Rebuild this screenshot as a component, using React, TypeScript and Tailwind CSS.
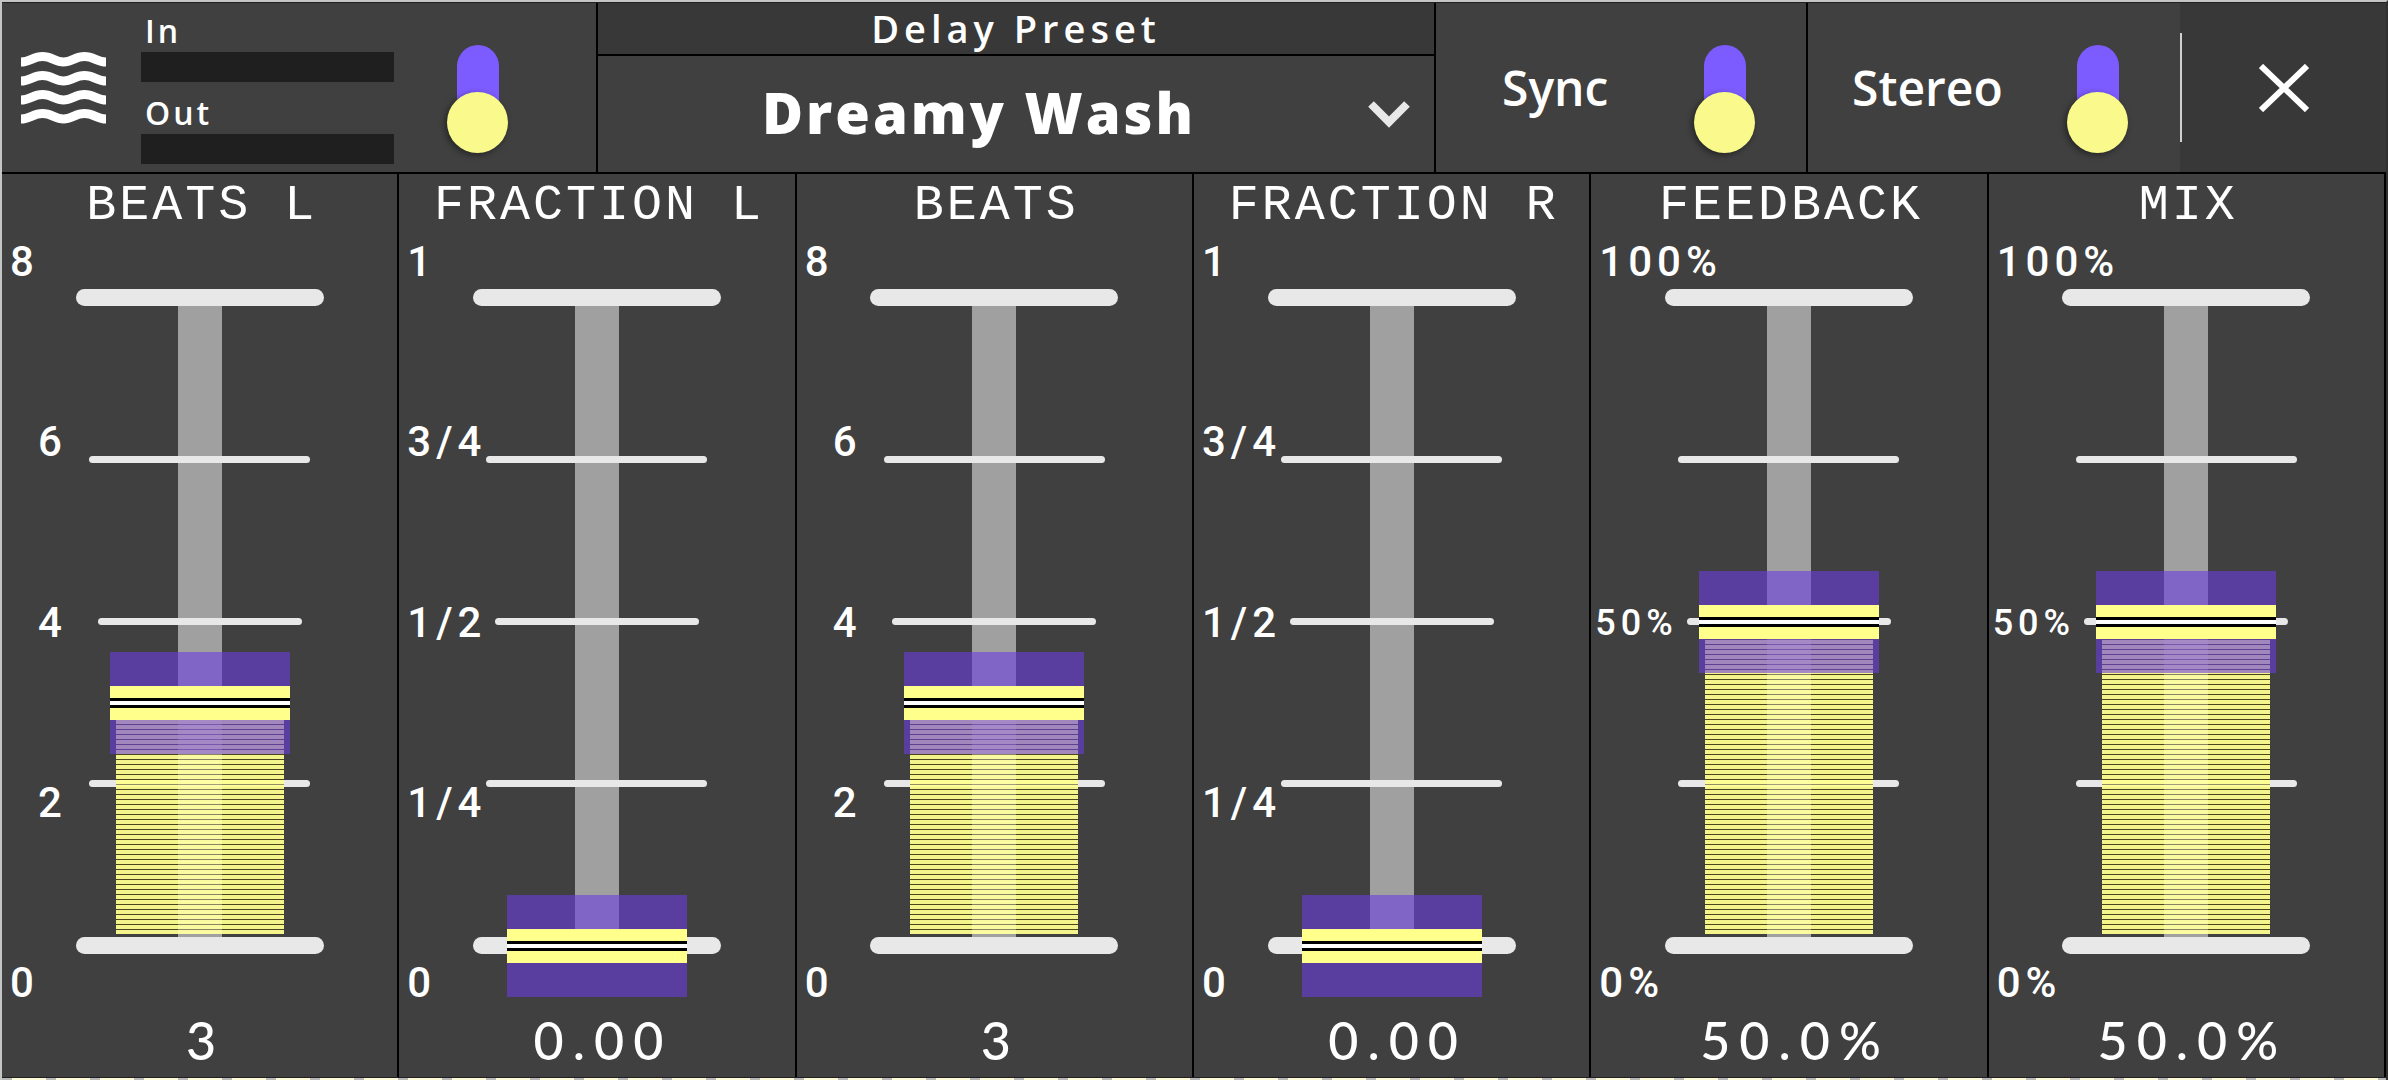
import { useState } from "react";

type Scale = { text: string; className: string };

type Channel = {
  name: string;
  max: number;
  step: number;
  initial: number;
  scale: Scale[];
  format: (v: number) => string;
};

const EDGE = "pl-2 text-[42px]";
const INDENT = "pl-9 text-[42px]";
const SMALL = "pl-1 text-[36px]";

const BEATS: Scale[] = [
  { text: "8", className: EDGE },
  { text: "6", className: INDENT },
  { text: "4", className: INDENT },
  { text: "2", className: INDENT },
  { text: "0", className: EDGE },
];

const FRACTIONS: Scale[] = [
  { text: "1", className: EDGE },
  { text: "3/4", className: EDGE },
  { text: "1/2", className: EDGE },
  { text: "1/4", className: EDGE },
  { text: "0", className: EDGE },
];

const PERCENT: Scale[] = [
  { text: "100%", className: EDGE },
  { text: "", className: SMALL },
  { text: "50%", className: SMALL },
  { text: "", className: SMALL },
  { text: "0%", className: EDGE },
];

const whole = (v: number) => v.toFixed(0);
const decimal = (v: number) => v.toFixed(2);
const percent = (v: number) => `${v.toFixed(1)}%`;

const CHANNELS: Channel[] = [
  { name: "BEATS L", max: 8, step: 1, initial: 3, scale: BEATS, format: whole },
  { name: "FRACTION L", max: 1, step: 0.01, initial: 0, scale: FRACTIONS, format: decimal },
  { name: "BEATS", max: 8, step: 1, initial: 3, scale: BEATS, format: whole },
  { name: "FRACTION R", max: 1, step: 0.01, initial: 0, scale: FRACTIONS, format: decimal },
  { name: "FEEDBACK", max: 100, step: 0.5, initial: 50, scale: PERCENT, format: percent },
  { name: "MIX", max: 100, step: 0.5, initial: 50, scale: PERCENT, format: percent },
];

const TICKS = [
  "h-[17px] w-[248px]",
  "h-[7px] w-[221px]",
  "h-[7px] w-[204px]",
  "h-[7px] w-[221px]",
  "h-[17px] w-[248px]",
];

function Fader({ channel }: { channel: Channel }) {
  const [value, setValue] = useState(channel.initial);
  const level = `${(value / channel.max) * 100}%`;
  return (
    <section className="flex flex-col border-r-2 border-black bg-[#404040]">
      <h2 className="h-[66px] pl-1 text-center font-['Liberation_Mono',monospace] text-[50px] leading-[64px] tracking-[3px] whitespace-nowrap">
        {channel.name}
      </h2>
      <div className="grid min-h-[600px] flex-1">
        <ul className="col-start-1 row-start-1 flex flex-col justify-between font-['Roboto',sans-serif] font-medium tracking-[5px]">
          {channel.scale.map((mark, i) => (
            <li key={i} className={`h-11 leading-[44px] ${mark.className}`}>
              {mark.text}
            </li>
          ))}
        </ul>
        <div className="relative col-start-1 row-start-1 mx-auto mt-[49px] mb-[51px] w-[248px]">
          <div className="absolute inset-x-[102px] inset-y-2 bg-[#a0a0a0]" />
          <div className="absolute inset-0 flex flex-col items-center justify-between">
            {TICKS.map((tick, i) => (
              <div key={i} className="flex h-[17px] items-center">
                <div className={`rounded-full bg-[#e8e8e8] ${tick}`} />
              </div>
            ))}
          </div>
          <div className="absolute inset-x-0 inset-y-2">
            <div
              className="absolute inset-x-[40px] bottom-0 overflow-hidden"
              style={{ height: level }}
            >
              <div className="absolute inset-x-0 top-0 bottom-3 bg-[repeating-linear-gradient(to_top,#ffff90f0_0px,#ffff90f0_4px,#50480090_4px,#50480090_5px)]" />
              <div className="absolute inset-x-[62px] top-0 bottom-3 bg-white/15" />
            </div>
            <div
              className="absolute inset-x-[34px] flex h-[102px] translate-y-1/2 flex-col"
              style={{ bottom: level }}
            >
              <div className="flex-1 bg-[#6b3ee0]/60" />
              <div className="h-3 bg-[#ffff8c]" />
              <div className="h-[3px] bg-black" />
              <div className="h-1 bg-white" />
              <div className="h-[3px] bg-black" />
              <div className="h-3 bg-[#ffff8c]" />
              <div className="flex-1 bg-[#6b3ee0]/60" />
            </div>
          </div>
          <input
            type="range"
            aria-label={channel.name}
            min={0}
            max={channel.max}
            step={channel.step}
            value={value}
            onChange={(e) => setValue(Number(e.target.value))}
            className="absolute inset-0 h-full w-full cursor-pointer opacity-0 [direction:rtl] [writing-mode:vertical-lr]"
          />
        </div>
      </div>
      <output className="h-[72px] pl-3 text-center font-['Lato',sans-serif] text-[52px] leading-[70px] font-medium tracking-[9px]">
        {channel.format(value)}
      </output>
    </section>
  );
}

function Toggle({ label }: { label: string }) {
  const [on, setOn] = useState(false);
  return (
    <label className="relative flex h-[108px] w-[61px] cursor-pointer justify-center">
      <input
        type="checkbox"
        role="switch"
        aria-label={label}
        checked={on}
        onChange={() => setOn(!on)}
        className="peer absolute inset-0 h-full w-full cursor-pointer opacity-0"
      />
      <span className="h-24 w-[42px] rounded-full bg-[#7c5cff]" />
      <span className="absolute bottom-0 size-[61px] rounded-full bg-[#fafa8c] shadow-[-2px_2px_6px_rgba(0,0,0,0.45)] peer-checked:bottom-12" />
    </label>
  );
}

function Waves() {
  return (
    <svg className="h-[72px] w-[85px]" viewBox="0 0 85 72" fill="none" stroke="#fff" strokeWidth="9" aria-hidden="true">
      {[10, 29, 48, 67].map((y) => (
        <path
          key={y}
          d={`M0 ${y}C9 ${y} 12 ${y - 5.5} 21.5 ${y - 5.5}S34 ${y} 42.5 ${y}S54 ${y - 5.5} 63.5 ${y - 5.5}S76 ${y} 85 ${y}`}
        />
      ))}
    </svg>
  );
}

function Meter({ label }: { label: string }) {
  return (
    <div>
      <div className="h-[42px] pl-1 text-[32px] leading-[42px] font-semibold tracking-[3px]">{label}</div>
      <div role="meter" aria-label={label} aria-valuenow={0} className="h-[30px] bg-[#1f1f1f]" />
    </div>
  );
}

export default function App() {
  return (
    <div className="flex min-h-screen flex-col border-t-2 border-r-2 border-l-2 border-[#c4c6c6] border-r-[#303030] bg-[#404040] font-['Open_Sans',sans-serif] text-white">
      <header className="flex h-[172px] border-t border-b-2 border-t-[#202020] border-b-black">
        <div className="flex w-1/4 items-center border-r-2 border-black pl-[19px]">
          <Waves />
          <div className="ml-[35px] flex w-[253px] flex-col gap-[10px] pb-[2px]">
            <Meter label="In" />
            <Meter label="Out" />
          </div>
          <div className="ml-[53px] pt-[22px]">
            <Toggle label="Effect" />
          </div>
        </div>
        <div className="flex flex-1 flex-col">
          <h1 className="h-[53px] border-b-2 border-black bg-[#383838] text-center text-[38px] leading-[51px] font-semibold tracking-[5px]">
            Delay Preset
          </h1>
          <button className="flex flex-1 items-center pr-6 pb-1 text-[56px] font-extrabold tracking-[3px]">
            <span className="flex-1 pr-2">Dreamy Wash</span>
            <svg className="mt-1 h-[28px] w-[42px]" viewBox="0 0 42 28" fill="none" stroke="#e8e8e8" strokeWidth="8" aria-hidden="true">
              <path d="M3 4L21 22L39 4" />
            </svg>
          </button>
        </div>
        <div className="flex w-[374px] items-center justify-between border-x-2 border-black pr-[51px] pl-[66px]">
          <span className="text-[48px] font-semibold">Sync</span>
          <div className="pt-[22px]">
            <Toggle label="Sync" />
          </div>
        </div>
        <div className="flex w-[372px] items-center justify-between pr-[52px] pl-[44px]">
          <span className="text-[48px] font-semibold">Stereo</span>
          <div className="pt-[22px]">
            <Toggle label="Stereo" />
          </div>
        </div>
        <button aria-label="Close" className="flex w-[206px] items-center bg-[#383838]">
          <span className="h-[109px] w-[2px] bg-[#d0d0d0]" />
          <svg className="mx-auto h-[48px] w-[50px]" viewBox="0 0 50 48" fill="none" stroke="#fff" strokeWidth="6" aria-hidden="true">
            <path d="M2 2L48 46M48 2L2 46" />
          </svg>
        </button>
      </header>
      <main className="grid flex-1 grid-cols-6 border-b border-[#202020]">
        {CHANNELS.map((c) => (
          <Fader key={c.name} channel={c} />
        ))}
      </main>
      <div className="h-[2px] bg-[repeating-linear-gradient(to_right,#b8b8b8_0px,#b8b8b8_10px,#fdfbd8_10px,#fdfbd8_44px)]" />
    </div>
  );
}
